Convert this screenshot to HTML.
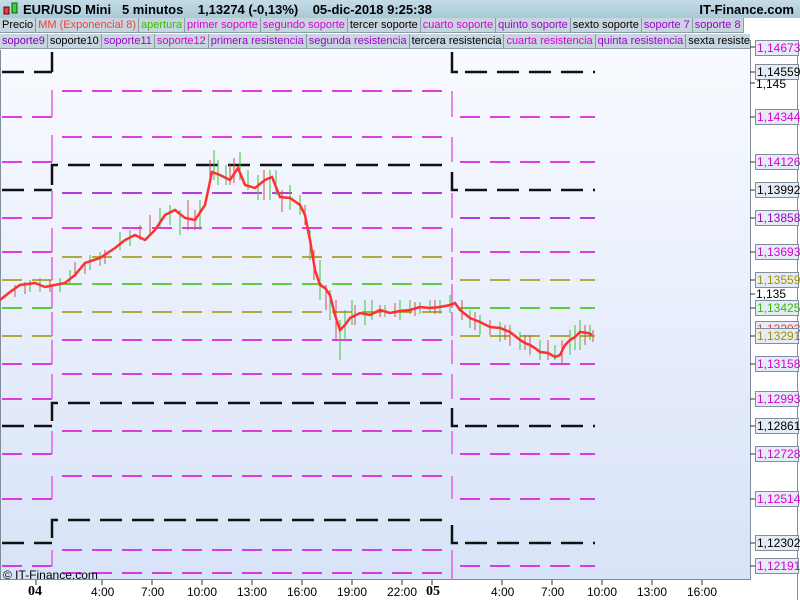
<!DOCTYPE html><html><head><meta charset="utf-8"><style>
body{margin:0;width:800px;height:600px;overflow:hidden;background:#fff;font-family:"Liberation Sans",sans-serif;position:relative}
.hdr{position:absolute;left:0;top:0;width:800px;height:18px;background:linear-gradient(#c4dce6,#a9c9d8);font-size:13px;font-weight:bold;color:#000}
.leg{position:absolute;left:0;height:15px;display:flex;font-size:11px;line-height:14px}
.leg span{background:#c7d5de;border-right:1px solid #8a9aa6;border-bottom:1px solid #8a9aa6;padding:0 2px;white-space:nowrap}
.lab{position:absolute;left:755px;width:41px;height:14px;border:1px solid #7f8e9a;background:#e6ecf5;font-size:12px;line-height:14px;text-align:left;padding-left:1px;box-sizing:content-box}
.t{position:absolute;top:585px;font-size:12px}
</style></head><body>
<div style="position:absolute;left:0;top:50px;width:750px;height:530px;background:linear-gradient(#f8faff,#d8e3f8);border-left:1px solid #7f8e9a;border-bottom:1px solid #7f8e9a;box-sizing:border-box"></div>
<div style="position:absolute;left:750px;top:40px;width:1px;height:540px;background:#7f8e9a"></div>
<div style="position:absolute;left:797px;top:40px;width:1px;height:560px;background:#7f8e9a"></div>
<svg style="position:absolute;left:0;top:0" width="800" height="600">
<g fill="none" stroke-width="1.5">
<g stroke-dasharray="20 10">
<path d="M2 117H52M2 162H52M2 218H52M2 252H52M2 364H52M2 399H52M2 454H52M2 499H52M2 566H52" stroke="#d800d8"/>
<path d="M2 280H52M2 336H52" stroke="#a09000"/><path d="M2 308H52" stroke="#30c000"/>
</g>
<path d="M2 72H52M2 190H52M2 426H52M2 543H52" stroke="#111" stroke-width="2.5" stroke-dasharray="22 10"/>
<g stroke-dasharray="20 10">
<path d="M62 91H450M62 137H450M62 228H450M62 340H450M62 374H450M62 431H450M62 476H450M62 550H450M62 573H450" stroke="#d800d8"/>
<path d="M62 193H450" stroke="#a000d0"/>
<path d="M62 257H450M62 312H450" stroke="#a09000"/><path d="M62 284H450" stroke="#30c000"/>
</g>
<path d="M68 165H450M68 403H450M68 520H450" stroke="#111" stroke-width="2.5" stroke-dasharray="22 10"/>
<path d="M52 52V72M52 185V165H58M52 421V403H58M52 538V520H58" stroke="#111" stroke-width="2.5"/>
<path d="M52 90V117M52 135V162M52 190V218M52 228V252M52 257V280M52 284V308M52 312V336M52 340V364M52 374V399M52 431V454M52 476V499M52 550V566" stroke="#e060e0"/>
<g stroke-dasharray="20 10">
<path d="M460 117H595M460 162H595M460 252H595M460 364H595M460 399H595M460 454H595M460 499H595M460 566H595" stroke="#d800d8"/>
<path d="M460 218H595" stroke="#a000d0"/>
<path d="M460 280H595M460 336H595" stroke="#a09000"/><path d="M460 308H595" stroke="#30c000"/>
</g>
<path d="M465 72H595M465 190H595M465 426H595M465 543H595" stroke="#111" stroke-width="2.5" stroke-dasharray="22 10"/>
<path d="M452 52V72H458M452 172V190H458M452 408V426H458M452 525V543H458" stroke="#111" stroke-width="2.5"/>
<path d="M452 91V117M452 137V162M452 193V218M452 228V252M452 257V280M452 284V308M452 312V336M452 340V364M452 374V399M452 431V454M452 476V499M452 550V580" stroke="#e060e0"/>
<path d="M750 47h5M750 72h5M750 83h5M750 117h5M750 162h5M750 190h5M750 218h5M750 252h5M750 280h5M750 294h5M750 308h5M750 336h5M750 364h5M750 399h5M750 426h5M750 454h5M750 499h5M750 543h5M750 566h5M36 580v5M102 580v5M152 580v5M202 580v5M252 580v5M302 580v5M352 580v5M402 580v5M432 580v5M502 580v5M552 580v5M602 580v5M652 580v5M702 580v5" stroke="#333" stroke-width="1"/>
<path d="M30 280v12M40 278v14M60 278v14M70 270v14M90 255v15M100 252v14M120 232v18M130 230v16M160 208v20M170 205v20M180 210v25M200 200v30M214 150v30M218 160v25M226 165v20M240 152v28M248 170v20M258 175v25M270 170v30M276 170v25M290 185v25M300 195v20M310 230v30M320 260v40M330 290v30M340 320v40M345 310v30M352 300v25M365 300v25M372 300v20M385 305v12M400 300v20M410 300v14M420 302v12M430 300v12M440 300v14M450 295v18M470 310v18M480 315v20M500 322v20M510 325v18M520 332v18M530 335v20M540 340v20M555 345v15M570 330v25M575 325v25M580 320v30M590 325v15" stroke="#40c040" stroke-width="1"/>
<path d="M15 285v12M25 282v12M50 280v12M75 262v15M85 262v12M105 250v14M140 225v15M150 215v20M188 200v30M195 210v20M210 160v25M230 165v20M234 158v25M264 170v30M282 190v22M305 205v20M314 250v30M326 285v25M336 300v40M355 305v20M380 305v12M395 303v14M415 302v14M435 300v14M462 300v20M475 312v18M490 320v15M505 325v15M510 328v18M525 335v15M530 335v18M548 340v20M562 340v25M585 325v20M593 330v12" stroke="#d05050" stroke-width="1"/>
<polyline stroke="#ff3030" stroke-width="2.5" points="0,300 10,292 20,285 35,283 45,287 55,285 65,283 75,275 85,263 100,258 115,248 125,240 135,235 145,240 155,230 165,215 175,210 185,218 195,220 205,205 212,172 220,175 230,180 238,168 245,185 255,188 265,180 272,177 280,197 290,198 300,205 305,215 310,240 315,270 320,285 325,288 330,295 335,315 340,330 345,325 350,318 360,313 370,315 380,310 390,313 400,311 410,310 420,307 430,308 440,307 450,305 455,303 460,310 470,318 480,322 490,327 500,328 510,332 520,340 525,343 530,345 535,348 540,352 548,353 555,357 560,355 565,345 570,340 575,337 580,332 588,333 592,335"/>
</g>
</svg>
<div class="hdr"><svg style="position:absolute;left:3px;top:2px" width="16" height="14"><rect x="1" y="5" width="5" height="7" fill="#e04040" stroke="#600"/><rect x="9" y="1" width="5" height="10" fill="#40d040" stroke="#060"/></svg><span style="position:absolute;left:23px;top:2px">EUR/USD Mini&nbsp;&nbsp;&nbsp;5 minutos&nbsp;&nbsp;&nbsp;&nbsp;1,13274 (-0,13%)&nbsp;&nbsp;&nbsp;&nbsp;05-dic-2018 9:25:38</span><span style="position:absolute;right:6px;top:2px">IT-Finance.com</span></div>
<div class="leg" style="top:18px;background:#fff;width:683px"><span>Precio</span><span style="color:#f04040">MM (Exponencial 8)</span><span style="color:#30c000">apertura</span><span style="color:#d800d8">primer soporte</span><span style="color:#d800d8">segundo soporte</span><span>tercer soporte</span><span style="color:#d800d8">cuarto soporte</span><span style="color:#a000d0">quinto soporte</span><span>sexto soporte</span><span style="color:#a000d0">soporte 7</span><span style="color:#a000d0">soporte 8</span></div>
<div class="leg" style="top:34px;width:750px;overflow:hidden"><span style="color:#8000c0">soporte9</span><span>soporte10</span><span style="color:#a000d0">soporte11</span><span style="color:#d800d8">soporte12</span><span style="color:#a000d0">primera resistencia</span><span style="color:#a000d0">segunda resistencia</span><span>tercera resistencia</span><span style="color:#d800d8">cuarta resistencia</span><span style="color:#a000d0">quinta resistencia</span><span>sexta resistencia</span></div>
<div class="lab" style="top:40px;color:#d800d8">1,14673</div>
<div class="lab" style="top:64px">1,14559</div>
<div style="position:absolute;left:756px;top:77px;font-size:12px">1,145</div>
<div class="lab" style="top:109px;color:#d800d8">1,14344</div>
<div class="lab" style="top:154px;color:#d800d8">1,14126</div>
<div class="lab" style="top:182px">1,13992</div>
<div class="lab" style="top:210px;color:#a000d0">1,13858</div>
<div class="lab" style="top:244px;color:#d800d8">1,13693</div>
<div class="lab" style="top:272px;color:#a09000">1,13559</div>
<div style="position:absolute;left:756px;top:287px;font-size:12px">1,135</div>
<div class="lab" style="top:300px;color:#30c000">1,13425</div>
<div class="lab" style="top:321px;color:#f04040">1,13293</div>
<div class="lab" style="top:328px;color:#a09000">1,13291</div>
<div class="lab" style="top:356px;color:#d800d8">1,13158</div>
<div class="lab" style="top:391px;color:#d800d8">1,12993</div>
<div class="lab" style="top:418px">1,12861</div>
<div class="lab" style="top:446px;color:#d800d8">1,12728</div>
<div class="lab" style="top:491px;color:#d800d8">1,12514</div>
<div class="lab" style="top:535px">1,12302</div>
<div class="lab" style="top:558px;color:#d800d8">1,12191</div>
<div style="position:absolute;left:3px;top:568px;font-size:12px">© IT-Finance.com</div>
<div class="t" style="left:28px;font-weight:bold;font-family:'Liberation Serif',serif;font-size:14px;top:584px">04</div>
<div class="t" style="left:91px">4:00</div><div class="t" style="left:141px">7:00</div><div class="t" style="left:187px">10:00</div><div class="t" style="left:237px">13:00</div><div class="t" style="left:287px">16:00</div><div class="t" style="left:337px">19:00</div><div class="t" style="left:387px">22:00</div>
<div class="t" style="left:426px;font-weight:bold;font-family:'Liberation Serif',serif;font-size:14px;top:584px">05</div>
<div class="t" style="left:491px">4:00</div><div class="t" style="left:541px">7:00</div><div class="t" style="left:587px">10:00</div><div class="t" style="left:637px">13:00</div><div class="t" style="left:687px">16:00</div>
</body></html>
